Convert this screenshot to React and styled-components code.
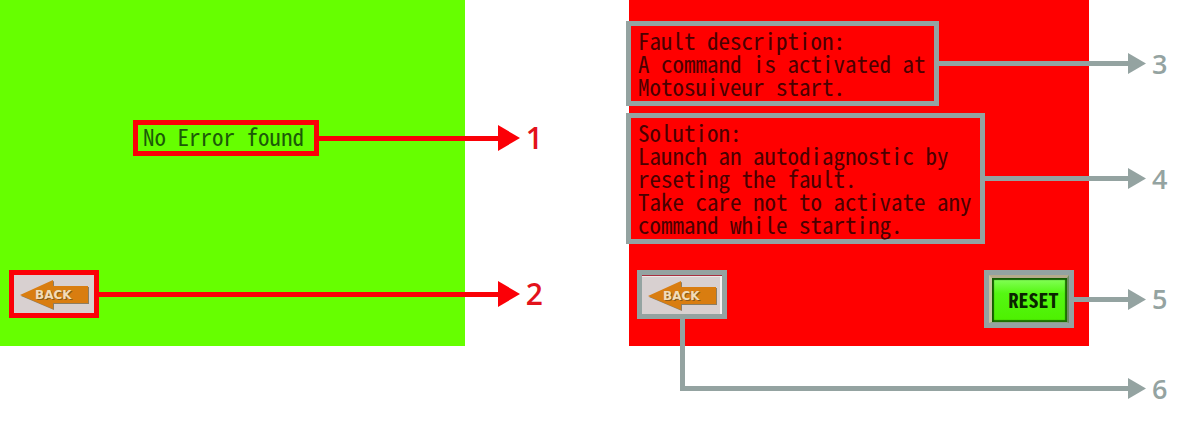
import React from "react";
import styled, { createGlobalStyle } from "styled-components";

const RED = "#fb0007";
const GREY = "#94a3a1";
const LCD_FONT = '"Noto Sans Mono CJK JP", "Noto Sans Mono CJK SC", "Liberation Mono", monospace';

const GlobalStyle = createGlobalStyle`
  *, *::before, *::after { box-sizing: border-box; }
  body { margin: 0; background: #fff; }
`;

const Page = styled.main`
  display: grid;
  grid-template-columns: 629fr 575fr;
  align-items: start;
`;

const Figure = styled.section`
  display: grid;
  grid-template-columns: ${(p) => p.$columns};
  grid-template-rows: 346px auto;
`;

const Screen = styled.div`
  grid-area: 1 / 1 / 2 / 2;
  background: ${(p) => p.$color};
`;

const Annotations = styled.div`
  grid-area: 1 / 1 / 3 / 3;
  display: flex;
  flex-direction: column;
  padding: ${(p) => p.$padding};
  margin-left: ${(p) => p.$outset || 0}px;
`;

const Row = styled.div`
  display: flex;
  align-items: ${(p) => p.$align || "center"};
  margin-top: ${(p) => p.$top || 0}px;
  padding-left: ${(p) => p.$indent || 0}px;
`;

const Frame = styled.div`
  flex: none;
  align-self: ${(p) => p.$align || "auto"};
  border: 5px solid ${(p) => p.$color};
`;

const Message = styled.p`
  margin: 0;
  padding: ${(p) => p.$padding};
  font-family: ${LCD_FONT};
  font-size: 23px;
  line-height: 23px;
  white-space: pre;
  color: ${(p) => p.$color};
`;

const Spacer = styled.div`
  flex: 1;
`;

const Line = styled.div`
  flex: ${(p) => (p.$length ? `0 0 ${p.$length}px` : "1")};
  height: 5px;
  background: ${(p) => p.$color};
`;

const Elbow = styled.div`
  flex: 1;
  height: 72px;
  margin-bottom: 8px;
  border: solid ${GREY};
  border-width: 0 0 5px 5px;
`;

const Head = styled.svg`
  flex: none;
  display: block;
`;

const Numeral = styled.span`
  flex: 0 0 17px;
  margin-left: 6px;
  font-family: "Open Sans", "Noto Sans", sans-serif;
  font-weight: 600;
  font-size: ${(p) => p.$size}px;
  line-height: 20px;
  color: ${(p) => p.$color};
`;

const BackKey = styled.button`
  display: block;
  width: 80px;
  height: ${(p) => (p.$bevel ? 39 : 38)}px;
  padding: 0;
  border: 0;
  background: #d8d0d0;
  box-shadow: ${(p) =>
    p.$bevel ? "inset 0 1px 0 #a83040, inset -2px 0 0 #f6f2f2, inset 0 2px 0 #eee6e6" : "none"};

  svg { display: block; }
`;

const ResetKey = styled.button`
  display: block;
  width: 80px;
  height: 48px;
  padding: 0 0 0 8px;
  border: solid;
  border-width: 3px 2px 1px 3px;
  border-color: #b5ab8c #6f8a62 #8aa086 #c9c3a0;
  background: linear-gradient(#86ff5c, #55f712 35%, #4df000);
  box-shadow: inset 2px 2px 1px #145c00, inset -2px -2px 1px #1c7000;
  font-family: ${LCD_FONT};
  font-size: 20px;
  font-weight: 700;
  line-height: 20px;
  color: #0a2400;
`;

function ArrowHead({ color, width, height }) {
  return (
    <Head width={width} height={height} aria-hidden="true">
      <polygon points={`0,0 ${width},${height / 2} 0,${height}`} fill={color} />
    </Head>
  );
}

function RedPointer({ n }) {
  return (
    <>
      <Line $color={RED} />
      <ArrowHead color={RED} width={22} height={26} />
      <Numeral $color="#e3121b" $size={30}>{n}</Numeral>
    </>
  );
}

function GreyEnd({ n }) {
  return (
    <>
      <ArrowHead color={GREY} width={18} height={21} />
      <Numeral $color={GREY} $size={27}>{n}</Numeral>
    </>
  );
}

function BackButton({ bevel }) {
  return (
    <BackKey type="button" $bevel={bevel}>
      <svg width="80" height="38" viewBox="0 0 80 38">
        <path d="M7 21 L40 6 V12 H75 V29 H40 V35 Z" fill="#8d7d62" />
        <path d="M6 20 L39 5 V11 H74 V28 H39 V34 Z" fill="#d97d10" />
        <g fontFamily="DejaVu Sans, sans-serif" fontWeight="700" fontSize="12">
          <text x="22" y="25" fill="#8a5a1c">BACK</text>
          <text x="21" y="24" fill="#f0dcb8">BACK</text>
        </g>
      </svg>
    </BackKey>
  );
}

export default function App() {
  return (
    <>
      <GlobalStyle />
      <Page>
        <Figure $columns="465fr 164fr">
          <Screen $color="#66ff00" />
          <Annotations $padding="120px 86px 0 0">
            <Row $indent={133}>
              <Frame $color={RED}>
                <Message $color="#1c5a08" $padding="0 10px 3px 5px">No Error found</Message>
              </Frame>
              <RedPointer n="1" />
            </Row>
            <Row $top={114} $indent={9}>
              <Frame $color={RED}>
                <BackButton />
              </Frame>
              <RedPointer n="2" />
            </Row>
          </Annotations>
        </Figure>

        <Figure $columns="460fr 115fr">
          <Screen $color="#ff0000" />
          <Annotations $padding="21px 35px 0 0" $outset={-3}>
            <Row>
              <Frame $color={GREY}>
                <Message $color="#4a0000" $padding="3px 8px 3px 7px">
                  {"Fault description:\nA command is activated at\nMotosuiveur start."}
                </Message>
              </Frame>
              <Line $color={GREY} />
              <GreyEnd n="3" />
            </Row>
            <Row $top={7}>
              <Frame $color={GREY}>
                <Message $color="#4a0000" $padding="3px 8px 3px 7px">
                  {"Solution:\nLaunch an autodiagnostic by\nreseting the fault.\nTake care not to activate any\ncommand while starting."}
                </Message>
              </Frame>
              <Line $color={GREY} />
              <GreyEnd n="4" />
            </Row>
            <Row $top={26} $indent={11}>
              <Frame $color={GREY} $align="flex-start">
                <BackButton bevel />
              </Frame>
              <Spacer />
              <Frame $color={GREY}>
                <ResetKey type="button">RESET</ResetKey>
              </Frame>
              <Line $color={GREY} $length={54} />
              <GreyEnd n="5" />
            </Row>
            <Row $top={-9} $indent={54} $align="flex-end">
              <Elbow />
              <GreyEnd n="6" />
            </Row>
          </Annotations>
        </Figure>
      </Page>
    </>
  );
}
